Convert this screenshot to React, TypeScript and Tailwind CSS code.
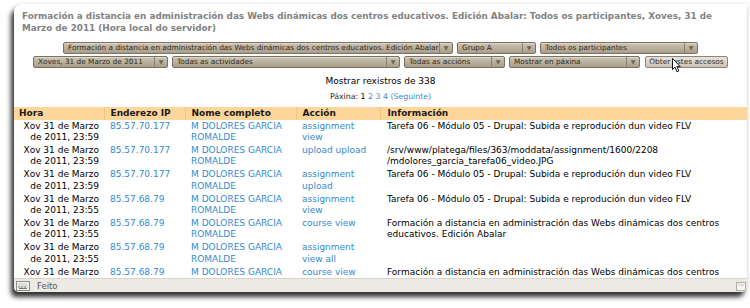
import React from "react";

const LINK = "text-[#3489cf]";

function Sel({ w, label }: { w: string; label: string }) {
  return (
    <div
      className={`${w} flex h-[12px] items-stretch overflow-hidden rounded-[2px] border border-[#7b7161] bg-linear-to-b from-[#cdc4b3] to-[#a89e8b] shadow-[inset_0_1px_0_rgba(255,255,255,0.35)]`}
    >
      <span className="flex-1 overflow-hidden whitespace-nowrap pl-[4px] text-[7.35px] leading-[10px] text-[#2e2920]">
        {label}
      </span>
      <span className="flex w-[13px] shrink-0 items-center justify-center border-l border-[#8a806f] text-[6px] leading-[10px] text-[#6c6455]">
        ▼
      </span>
    </div>
  );
}

type Row = {
  time: string;
  ip: string;
  action: [string, string?];
  info: [string, string?];
};

const rows: Row[] = [
  { time: "23:59", ip: "85.57.70.177", action: ["assignment", "view"], info: ["Tarefa 06 - Módulo 05 - Drupal: Subida e reprodución dun video FLV"] },
  { time: "23:59", ip: "85.57.70.177", action: ["upload upload"], info: ["/srv/www/platega/files/363/moddata/assignment/1600/2208", "/mdolores_garcia_tarefa06_video.JPG"] },
  { time: "23:59", ip: "85.57.70.177", action: ["assignment", "upload"], info: ["Tarefa 06 - Módulo 05 - Drupal: Subida e reprodución dun video FLV"] },
  { time: "23:55", ip: "85.57.68.79", action: ["assignment", "view"], info: ["Tarefa 06 - Módulo 05 - Drupal: Subida e reprodución dun video FLV"] },
  { time: "23:55", ip: "85.57.68.79", action: ["course view"], info: ["Formación a distancia en administración das Webs dinámicas dos centros", "educativos. Edición Abalar"] },
  { time: "23:55", ip: "85.57.68.79", action: ["assignment", "view all"], info: [""] },
  { time: "23:55", ip: "85.57.68.79", action: ["course view"], info: ["Formación a distancia en administración das Webs dinámicas dos centros", "educativos. Edición Abalar"] },
];

export default function App() {
  return (
    <div className="relative h-[308px] w-[750px] overflow-hidden bg-white font-['DejaVu_Sans',sans-serif]">
      <div className="ml-[14px] mt-[4px] flex h-[288px] w-[733px] flex-col overflow-hidden rounded-tl-[8px] rounded-bl-[5px] rounded-br-[6px] bg-white shadow-[-3px_5px_5px_rgba(0,0,0,0.8),0_0_4px_rgba(0,0,0,0.12)]">
        <div className="min-h-0 flex-1 overflow-hidden">
          <div className="whitespace-nowrap px-[8px] pt-[5.5px] text-[8.82px] font-bold leading-[12.7px] text-[#828282]">
            Formación a distancia en administración das Webs dinámicas dos centros educativos. Edición Abalar: Todos os participantes, Xoves, 31 de
            <br />
            Marzo de 2011 (Hora local do servidor)
          </div>

          <div className="mt-[7px] flex flex-col items-center gap-[2px]">
            <div className="flex gap-[4px]">
              <Sel w="w-[390px]" label="Formación a distancia en administración das Webs dinámicas dos centros educativos. Edición Abalar" />
              <Sel w="w-[79px]" label="Grupo A" />
              <Sel w="w-[158px]" label="Todos os participantes" />
            </div>
            <div className="flex gap-[4px]">
              <Sel w="w-[135px]" label="Xoves, 31 de Marzo de 2011" />
              <Sel w="w-[228px]" label="Todas as actividades" />
              <Sel w="w-[101px]" label="Todas as accións" />
              <Sel w="w-[131px]" label="Mostrar en páxina" />
              <div className="ml-[1px] flex h-[12px] w-[83px] items-center justify-center rounded-[2px] border border-[#8c8474] bg-linear-to-b from-[#e8e3da] to-[#cbc4b6] text-[7.35px] leading-[10px] text-[#2e2920]">
                Obter estes accesos
              </div>
            </div>
          </div>

          <div className="mt-[7px] text-center text-[9px] leading-[12px] text-black">
            Mostrar rexistros de 338
          </div>
          <div className="mt-[5px] text-center text-[7.8px] leading-[10px] text-[#222]">
            Páxina: <span className="text-black">1</span> <span className={LINK}>2</span> <span className={LINK}>3</span>{" "}
            <span className={LINK}>4</span> <span className={LINK}>(Seguinte)</span>
          </div>

          <table className="mt-[5px] w-[733px] table-fixed border-collapse text-[9px] leading-[11.3px]">
            <colgroup>
              <col className="w-[90px]" />
              <col className="w-[81px]" />
              <col className="w-[111px]" />
              <col className="w-[84px]" />
              <col />
            </colgroup>
            <thead>
              <tr className="h-[13px] bg-[#fcd69b] text-left font-bold text-[#1a1a1a]">
                <th className="pl-[5px] font-bold">Hora</th>
                <th className="border-l border-[#f2c677] pl-[6px] font-bold">Enderezo IP</th>
                <th className="border-l border-[#f2c677] pl-[6px] font-bold">Nome completo</th>
                <th className="border-l border-[#f2c677] pl-[6px] font-bold">Acción</th>
                <th className="border-l border-[#f2c677] pl-[7px] font-bold">Información</th>
              </tr>
            </thead>
            <tbody>
              {rows.map((r, i) => (
                <tr key={i} className="align-top">
                  <td className="whitespace-nowrap pr-[5px] pt-[1px] pb-[0.7px] text-right text-black">
                    Xov 31 de Marzo
                    <br />
                    de 2011, {r.time}
                  </td>
                  <td className={`whitespace-nowrap pl-[6px] pt-[1px] ${LINK}`}>{r.ip}</td>
                  <td className={`whitespace-nowrap pl-[6px] pt-[1px] ${LINK}`}>
                    M DOLORES GARCIA
                    <br />
                    ROMALDE
                  </td>
                  <td className={`whitespace-nowrap pl-[6px] pt-[1px] ${LINK}`}>
                    {r.action[0]}
                    {r.action[1] && (
                      <>
                        <br />
                        {r.action[1]}
                      </>
                    )}
                  </td>
                  <td className="whitespace-nowrap pl-[7px] pt-[1px] text-black">
                    {r.info[0]}
                    {r.info[1] && (
                      <>
                        <br />
                        {r.info[1]}
                      </>
                    )}
                  </td>
                </tr>
              ))}
            </tbody>
          </table>
        </div>

        <div className="flex h-[14px] shrink-0 items-center border-t border-[#d9d5cc] bg-[#edeae3]">
          <svg width="14" height="10" viewBox="0 0 14 10" className="ml-[2px]">
            <rect x="0.5" y="0.5" width="13" height="9" fill="#f4f2ee" stroke="#8d8d8d" />
            <rect x="2" y="2" width="10" height="5" fill="#dcdcdc" />
            <line x1="3" y1="7.5" x2="11" y2="7.5" stroke="#7a7a7a" />
            <line x1="3" y1="5" x2="3" y2="7" stroke="#8a8a8a" />
            <line x1="6" y1="5" x2="6" y2="7" stroke="#8a8a8a" />
            <line x1="9" y1="5" x2="9" y2="7" stroke="#8a8a8a" />
          </svg>
          <span className="ml-[7px] text-[8.5px] leading-[10px] text-[#555]">Feito</span>
          <div className="flex-1" />
          <svg width="10" height="10" viewBox="0 0 10 10" className="mr-[1px]">
            <rect x="0.5" y="1.5" width="9" height="8" fill="#f6f5f2" stroke="#b0aca4" />
            <line x1="2" y1="4" x2="8" y2="4" stroke="#c8c4bc" />
          </svg>
        </div>
      </div>

      <svg width="10" height="15" viewBox="0 0 10 15" className="absolute left-[672px] top-[58px]">
        <path d="M0.5 0.5 L0.5 11.5 L3 9.2 L5 13.8 L6.8 13 L4.9 8.6 L8.3 8.6 Z" fill="#fff" stroke="#111" strokeWidth="1" strokeLinejoin="round" />
      </svg>
    </div>
  );
}
